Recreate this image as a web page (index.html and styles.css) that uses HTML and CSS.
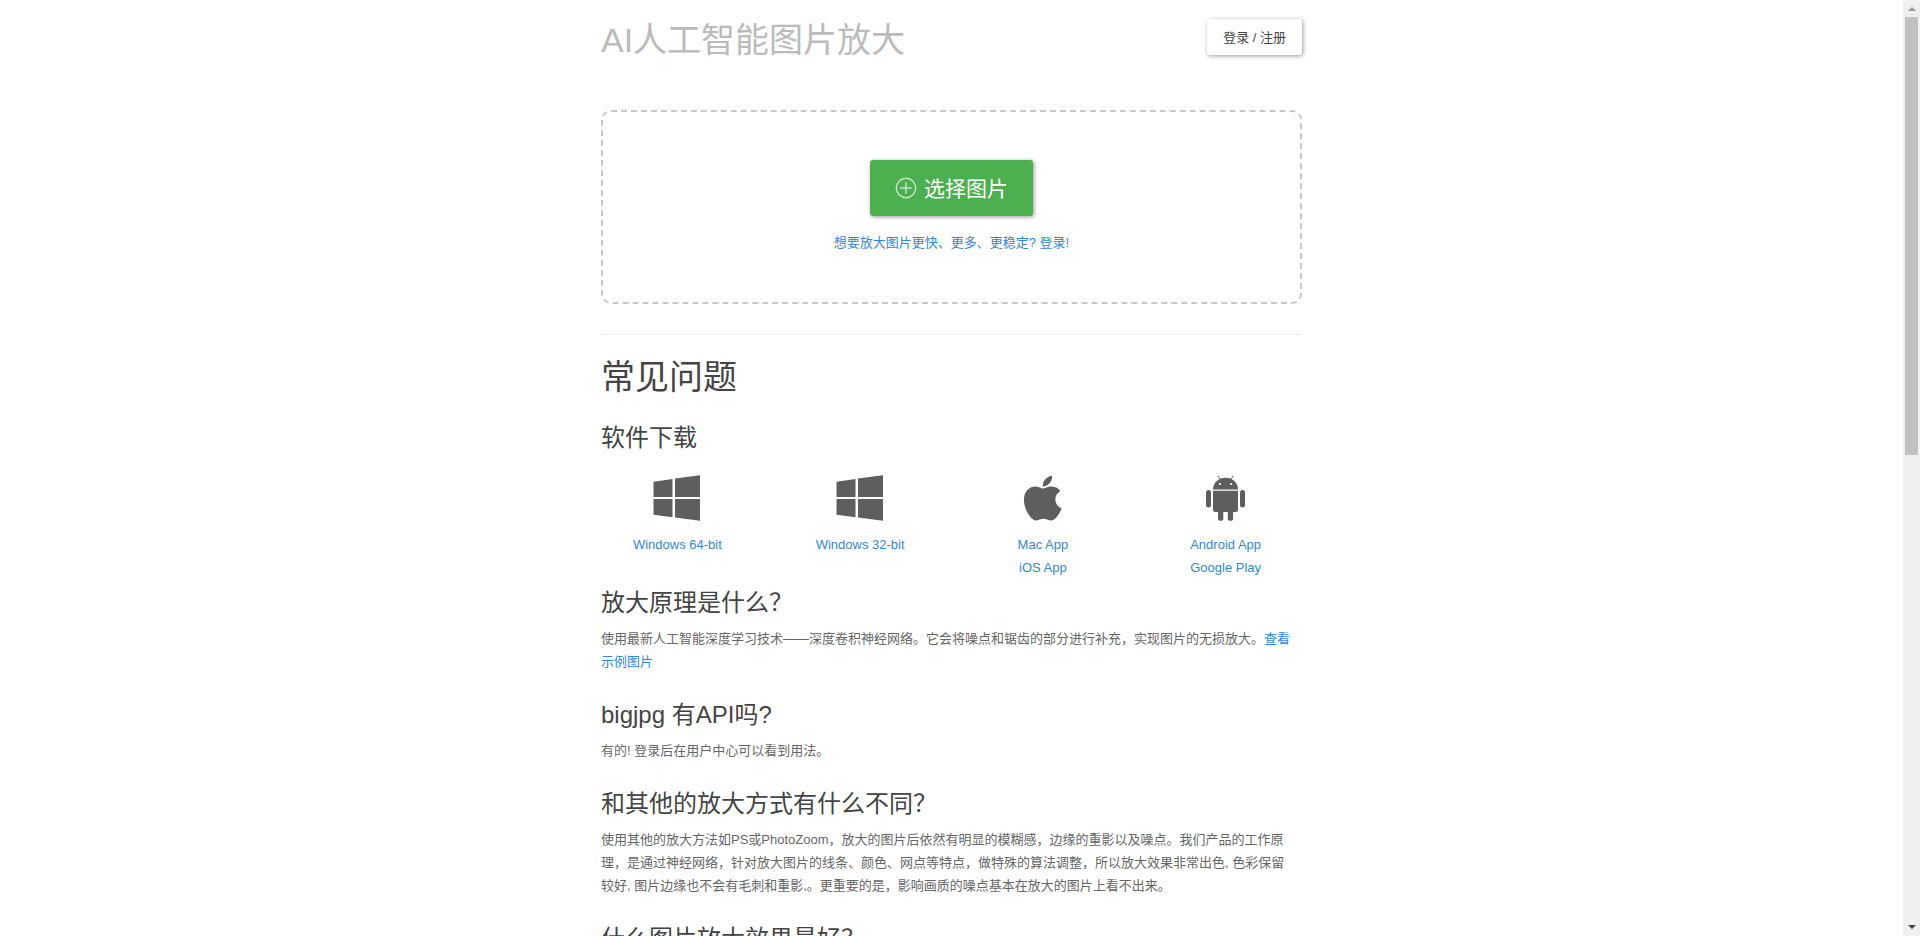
FILE: index.html
```
<!DOCTYPE html>
<html lang="zh-Hans">
<head>
    <meta charset="UTF-8">
    <meta name="viewport" content="width=device-width, initial-scale=1.0">
    <title>AI人工智能图片放大</title>
    <link rel="stylesheet" href="styles.css">
</head>
<body>
    <svg class="defs" width="0" height="0" aria-hidden="true">
        <symbol id="windows" viewBox="0 0 48 48">
            <path d="M0.5 7.7L19.5 5V23H0.5zM22 4.6L47 1.2V23H22zM0.5 25H19.5V43.2L0.5 40.7zM22 25H47V46.8L22 43.5z"/>
        </symbol>
    </svg>

    <div class="page">
        <div class="container">
            <header>
                <h1>AI人工智能图片放大</h1>
                <button class="login" type="button">登录 / 注册</button>
            </header>

            <div class="upload">
                <button class="select" type="button">
                    <svg class="plus" viewBox="0 0 22 22" aria-hidden="true">
                        <circle cx="11" cy="11" r="9.7"/>
                        <path d="M11 5.2V16.8M5.2 11H16.8"/>
                    </svg>
                    选择图片
                </button>
                <a href="#">想要放大图片更快、更多、更稳定? 登录!</a>
            </div>

            <hr>

            <h2>常见问题</h2>

            <h3>软件下载</h3>
            <ul class="downloads">
                <li>
                    <svg class="icon" aria-hidden="true"><use href="#windows"/></svg>
                    <a href="#">Windows 64-bit</a>
                </li>
                <li>
                    <svg class="icon" aria-hidden="true"><use href="#windows"/></svg>
                    <a href="#">Windows 32-bit</a>
                </li>
                <li>
                    <svg class="icon" viewBox="0 0 48 48" aria-hidden="true">
                        <path transform="translate(4.5 -1.5) scale(.1)" d="M318.7 268.7c-.2-36.7 16.4-64.4 50-84.8-18.8-26.9-47.2-41.7-84.7-44.6-35.5-2.8-74.3 20.7-88.5 20.7-15 0-49.4-19.7-76.4-19.7C63.3 141.2 4 184.8 4 273.5q0 39.3 14.4 81.2c12.8 36.7 59 126.7 107.2 125.2 25.2-.6 43-17.9 75.8-17.9 31.8 0 48.3 17.9 76.4 17.9 48.6-.7 90.4-82.5 102.6-119.3-65.2-30.7-61.7-90-61.7-91.9zm-56.6-164.2c27.3-32.4 24.8-61.9 24-72.5-24.1 1.4-52 16.4-67.9 34.9-17.5 19.8-27.8 44.3-25.6 71.9 26.1 2 49.9-11.4 69.5-34.3z"/>
                    </svg>
                    <a href="#">Mac App</a>
                    <a href="#">iOS App</a>
                </li>
                <li>
                    <svg class="icon" viewBox="0 0 48 48" aria-hidden="true">
                        <path d="M11 15.4C11 8.5 16.5 3.7 23.5 3.7S36 8.5 36 15.4z"/>
                        <path d="M15.8 1.7L18 5.6M31.2 1.7L29 5.6" stroke="#5e5e5e" stroke-width="0.9"/>
                        <circle cx="18" cy="10" r="1.1" fill="#fff"/>
                        <circle cx="29.2" cy="10" r="1.1" fill="#fff"/>
                        <path d="M11 16.7H36V35.7Q36 37.9 33.8 37.9H13.2Q11 37.9 11 35.7z"/>
                        <rect x="4" y="16" width="5" height="17.5" rx="2.5"/>
                        <rect x="38" y="16" width="5" height="17.5" rx="2.5"/>
                        <rect x="16" y="32" width="5.3" height="14.8" rx="2.6"/>
                        <rect x="25.8" y="32" width="5.3" height="14.8" rx="2.6"/>
                    </svg>
                    <a href="#">Android App</a>
                    <a href="#">Google Play</a>
                </li>
            </ul>

            <h3>放大原理是什么？</h3>
            <p>使用最新人工智能深度学习技术——深度卷积神经网络。它会将噪点和锯齿的部分进行补充，实现图片的无损放大。<a href="#">查看示例图片</a></p>

            <h3>bigjpg 有API吗?</h3>
            <p>有的! 登录后在用户中心可以看到用法。</p>

            <h3>和其他的放大方式有什么不同？</h3>
            <p>使用其他的放大方法如PS或PhotoZoom，放大的图片后依然有明显的模糊感，边缘的重影以及噪点。我们产品的工作原理，是通过神经网络，针对放大图片的线条、颜色、网点等特点，做特殊的算法调整，所以放大效果非常出色, 色彩保留较好, 图片边缘也不会有毛刺和重影,。更重要的是，影响画质的噪点基本在放大的图片上看不出来。</p>

            <h3>什么图片放大效果最好？</h3>
        </div>
    </div>

    <div class="scrollbar" aria-hidden="true">
        <span class="arrow up"></span>
        <span class="thumb"></span>
        <span class="arrow down"></span>
    </div>
</body>
</html>
```
FILE: styles.css
```
* {
    box-sizing: border-box;
}

body {
    display: flex;
    height: 100vh;
    margin: 0;
    overflow: hidden;
    background: #fff;
    color: #666;
    font-family: "Liberation Sans", Arial, "Noto Sans CJK SC", sans-serif;
    font-size: 13px;
    line-height: 23px;
}

a {
    color: #3388d8;
    text-decoration: none;
}

a:hover {
    text-decoration: underline;
}

button {
    border: none;
    border-radius: 3px;
    font: inherit;
    cursor: pointer;
    box-shadow: 1px 1px 4px rgba(0, 0, 0, 0.4);
}

h1, h2, h3 {
    margin: 0;
    color: #444;
    font-weight: normal;
}

h1, h2 {
    font-size: 34px;
    line-height: 42px;
}

h1 {
    color: #bbb;
}

h2 {
    margin-bottom: 25px;
}

h3 {
    margin-bottom: 9px;
    font-size: 24px;
    line-height: 30px;
}

p {
    margin: 0 0 27px;
    padding-right: 8px;
}

hr {
    margin: 30px 0 21px;
    border: none;
    border-top: 1px solid #eee;
}

.defs {
    position: absolute;
}

.page {
    flex: 1;
    overflow: hidden;
}

.container {
    max-width: 701px;
    margin: 0 auto;
}

header {
    display: flex;
    align-items: flex-start;
    justify-content: space-between;
    padding: 19px 0 49px;
}

.login {
    height: 36px;
    padding: 0 16px;
    background: #fff;
    color: #444;
}

.upload {
    display: flex;
    flex-direction: column;
    align-items: center;
    gap: 15px;
    padding: 48px 20px;
    border: 2px dashed #c8c8c8;
    border-radius: 10px;
}

.select {
    display: flex;
    align-items: center;
    gap: 7px;
    height: 56px;
    padding: 0 25px;
    background: #4caf50;
    color: #fff;
    font-size: 21px;
}

.plus {
    width: 22px;
    height: 22px;
    fill: none;
    stroke: #c3e8c4;
    stroke-width: 1.4;
}

.downloads {
    display: grid;
    grid-template-columns: repeat(4, 1fr);
    margin: 0 -15px 9px;
    padding: 12px 0 0;
    list-style: none;
}

.downloads li {
    display: flex;
    flex-direction: column;
    align-items: center;
}

.icon {
    width: 48px;
    height: 48px;
    margin-bottom: 11px;
    fill: #5e5e5e;
}

.scrollbar {
    display: flex;
    flex-direction: column;
    align-items: center;
    width: 17px;
    padding: 7px 0;
    background: #f0f0f0;
}

.arrow {
    border: 4px solid transparent;
}

.up {
    border-top: none;
    border-bottom-color: #999;
}

.down {
    margin-top: auto;
    border-bottom: none;
    border-top-color: #444;
}

.thumb {
    width: 13px;
    height: 47.5%;
    margin-top: 6px;
    background: #c1c1c1;
}
```
